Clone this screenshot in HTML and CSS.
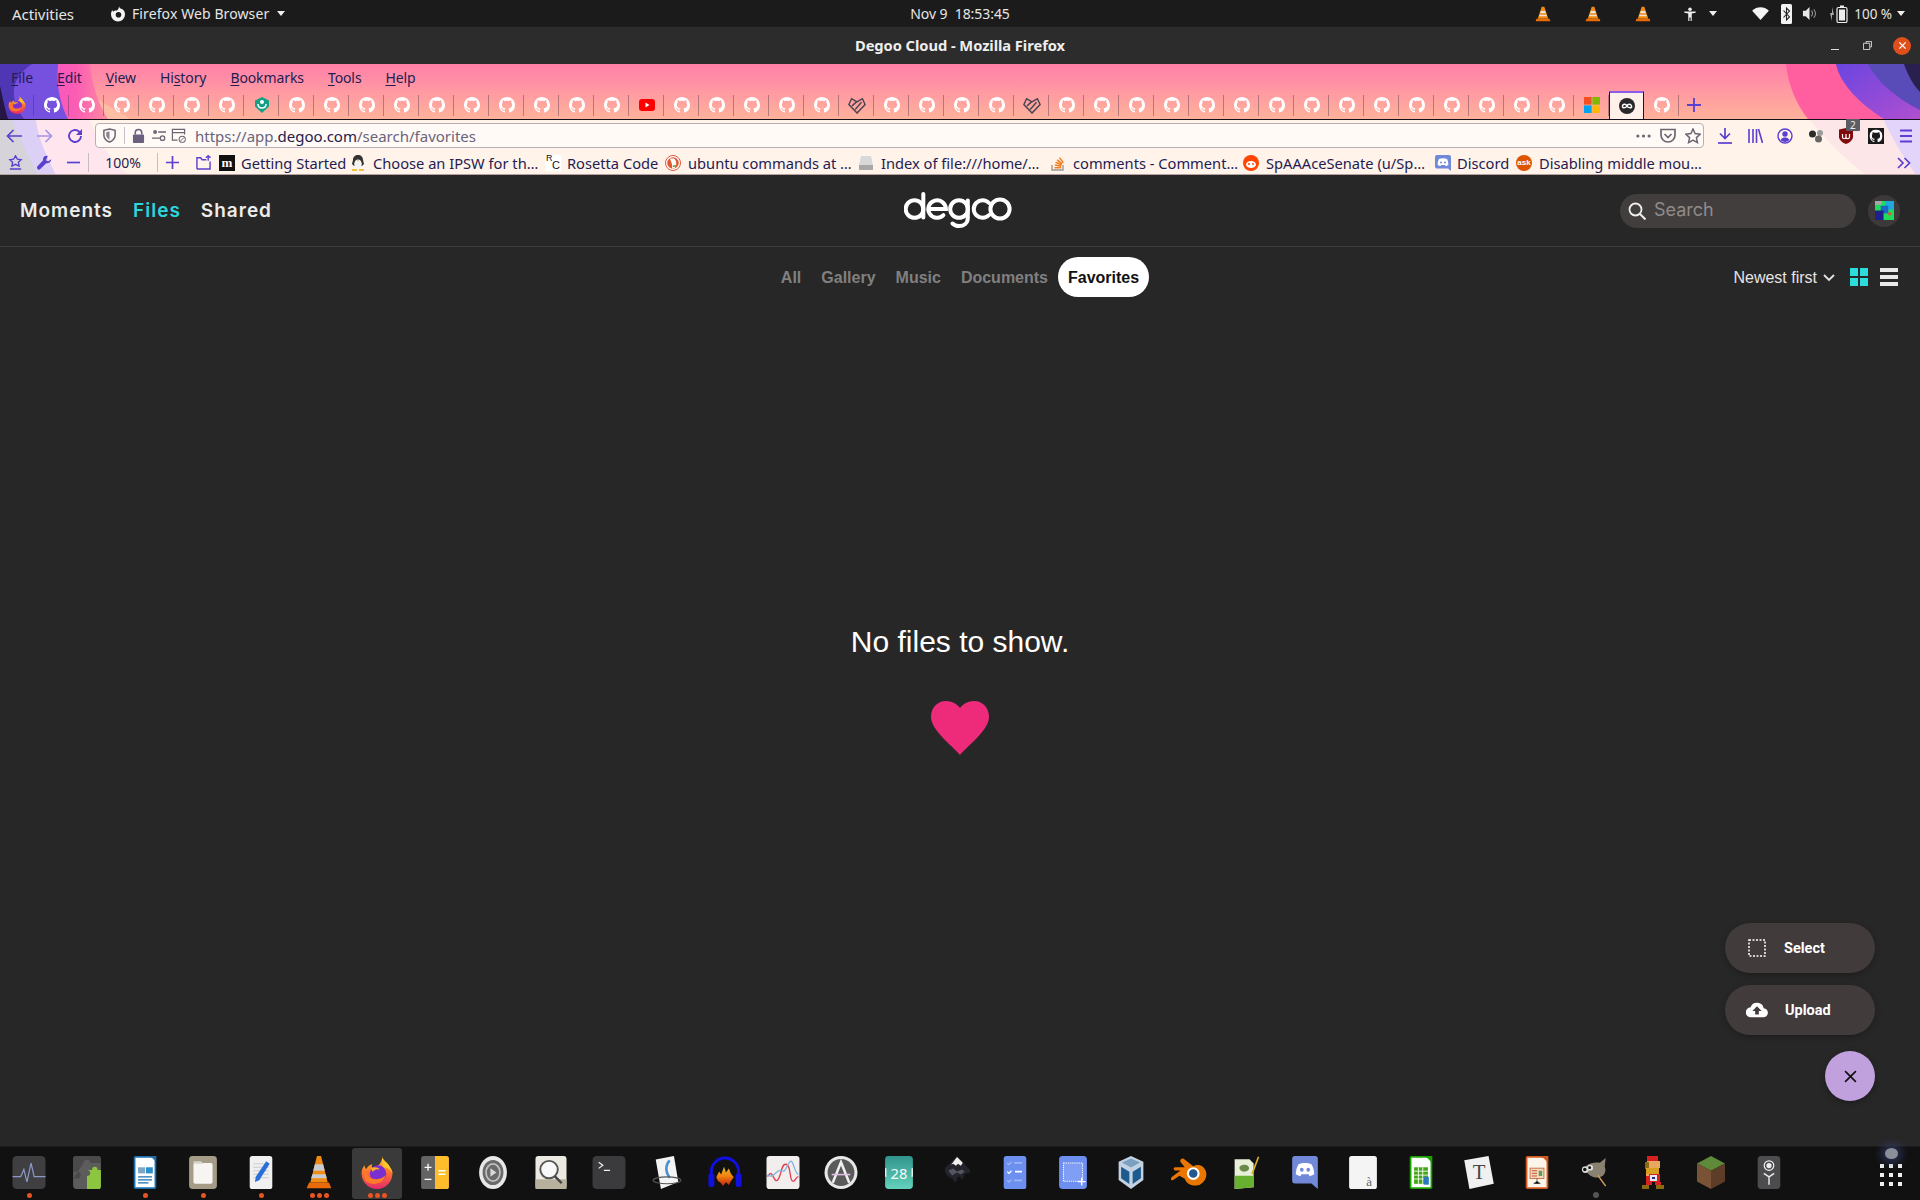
FILE: index.html
```html
<!DOCTYPE html>
<html lang="en">
<head>
<meta charset="utf-8">
<title>Degoo Cloud - Mozilla Firefox</title>
<link rel="stylesheet" href="styles.css">
</head>
<body>
<svg class="defs" aria-hidden="true">
  <defs>
    <linearGradient id="pinkg" x1="0" y1="0" x2="0" y2="1"><stop offset="0" stop-color="#ff80a9"/><stop offset="1" stop-color="#ffb29b"/></linearGradient>
    <linearGradient id="magg" x1="0" y1="0" x2="1" y2="0"><stop offset="0" stop-color="#f24fd0"/><stop offset=".7" stop-color="#fb5cb4"/><stop offset="1" stop-color="#ff8aa0"/></linearGradient>
    <linearGradient id="purg" x1="0" y1="0" x2="1" y2="1"><stop offset="0" stop-color="#6a45e0"/><stop offset="1" stop-color="#b04fd0"/></linearGradient>
    <linearGradient id="ffg" x1="0" y1="0" x2="0" y2="1"><stop offset="0" stop-color="#ffd02a"/><stop offset=".45" stop-color="#ff7a2a"/><stop offset="1" stop-color="#e5286e"/></linearGradient>
    <linearGradient id="tealg" x1="0" y1="0" x2="0" y2="1"><stop offset="0" stop-color="#32938c"/><stop offset="1" stop-color="#62d2bc"/></linearGradient>
    <linearGradient id="audg" x1="0" y1="0" x2="0" y2="1"><stop offset="0" stop-color="#e8c020"/><stop offset=".5" stop-color="#f08010"/><stop offset="1" stop-color="#c02010"/></linearGradient>
    <symbol id="gh" viewBox="0 0 16 16"><path fill-rule="evenodd" d="M8 0C3.58 0 0 3.58 0 8c0 3.54 2.29 6.53 5.47 7.59.4.07.55-.17.55-.38 0-.19-.01-.82-.01-1.49-2.01.37-2.53-.49-2.69-.94-.09-.23-.48-.94-.82-1.13-.28-.15-.68-.52-.01-.53.63-.01 1.08.58 1.23.82.72 1.21 1.87.87 2.33.66.07-.52.28-.87.51-1.07-1.78-.2-3.64-.89-3.64-3.95 0-.87.31-1.59.82-2.15-.08-.2-.36-1.02.08-2.12 0 0 .67-.21 2.2.82.64-.18 1.32-.27 2-.27.68 0 1.36.09 2 .27 1.53-1.04 2.2-.82 2.2-.82.44 1.1.16 1.92.08 2.12.51.56.82 1.28.82 2.15 0 3.07-1.87 3.75-3.65 3.95.29.25.54.73.54 1.48 0 1.07-.01 1.93-.01 2.2 0 .21.15.46.55.38A8.013 8.013 0 0016 8c0-4.42-3.58-8-8-8z"/></symbol>
    <symbol id="ff" viewBox="0 0 32 32"><path fill="url(#ffg)" d="M21 0c0 4 5 6 7 10 1 2 3 4 3 7 0 8-6.500 15-15 15S1 25 1 17c0-3 1-6 3-8 0 1 .5 3 1.500 3.500C7 10 9 8.500 11.500 8c-1 1.500-.5 3 .5 3.500 4-.5 9.500-4.500 9-11.500z"/><path fill="#ffc52a" d="M21 0c0 4 5 6 7 10 1 2 3 4 3 7-2-4-5-6-9-6-1-4 0-7-1-11z"/><circle cx="17" cy="17" r="8" fill="#7b2fd0"/><path fill="#ff7a2a" d="M4 14c3 9 14 11 20 5-1 8-13 11-19 5-2-3-2-7-1-10z"/><path fill="#ffb02a" d="M10 12c3-2 7-1 9 1-3-.5-6 0-7 2.500z"/></symbol>
    <symbol id="heart2" viewBox="0 0 20 20"><path fill="none" stroke="#4a4452" stroke-width="1.600" d="M10 19 1 9.500 4 3l6 3.500L16 3l3 6.500zM4.500 11 10 6M8 15l7-8"/></symbol>
    <symbol id="cone" viewBox="0 0 24 24"><path fill="#f08a12" d="M10 1h4l6 18H4z"/><path fill="#e8e4dc" d="M8.700 7.500h6.600l1.100 3.500H7.600zM6.800 13h10.400l.7 2.500H6.100z"/><path fill="#e86a0a" d="M2 19h20l1 4H1z"/></symbol>
  </defs>
</svg>

<header class="topbar">
  <div class="top-left">
    <span class="top-act">Activities</span>
    <span class="top-app">
      <svg class="top-ff" viewBox="0 0 16 16"><path fill="#f4f4f4" d="M9 0c0 2 2 3 3 3 2 1 3 3 3 5.500a7 7 0 1 1-14 0c0-2 .6-3.500 1.500-4.500 0 1 .5 1.500 1 1.500 1-1.500 3-1 3.500-1C8.500 3 9 2 9 0z"/><circle cx="8.500" cy="8.800" r="2.800" fill="#1c1c1c"/></svg>
      <span class="top-name">Firefox Web Browser</span>
      <i class="caret"></i>
    </span>
  </div>
  <div class="top-clock">Nov 9&nbsp; 18:53:45</div>
  <div class="top-right">
    <svg class="tray-cone"><use href="#cone"/></svg>
    <svg class="tray-cone"><use href="#cone"/></svg>
    <svg class="tray-cone"><use href="#cone"/></svg>
    <svg class="tray-person" viewBox="0 0 16 16"><circle cx="8" cy="2.500" r="2" fill="#eee"/><path fill="#eee" d="M1.500 5h13v1.600L10 7.500V16H8.700v-4H7.300v4H6V7.500L1.500 6.600z"/></svg>
    <i class="caret tray-caret"></i>
    <svg class="tray-wifi" viewBox="0 0 18 14"><path fill="#f4f4f4" d="M9 14 0 4c5-5 13-5 18 0z"/></svg>
    <svg class="tray-bt" viewBox="0 0 11 20"><rect width="11" height="20" rx="1.500" fill="#f2f2f2"/><path fill="none" stroke="#222" stroke-width="1.100" d="m2.500 6.500 6 6.500-3 3V4l3 3-6 6.500"/></svg>
    <svg class="tray-vol" viewBox="0 0 16 16"><path fill="#e8e8e8" d="M1 5h3l4-4v14l-4-4H1z"/><path fill="none" stroke="#999" stroke-width="1.100" d="M10 5c1.500 1.800 1.500 4.200 0 6M12.500 3.500c2.500 3 2.500 6 0 9"/></svg>
    <svg class="tray-bat" viewBox="0 0 20 18"><path fill="#aaa" d="M3 2v6H1l2 8v-6h2z"/><rect x="8" y="2.500" width="10" height="15" rx="1.500" fill="none" stroke="#eee" stroke-width="1.200"/><rect x="11" y="0.500" width="4" height="2" fill="#eee"/><rect x="10" y="4.500" width="6" height="11" fill="#eee"/></svg>
    <span class="top-pct">100 %</span>
    <i class="caret"></i>
  </div>
</header>

<div class="titlebar">
  <span class="title">Degoo Cloud - Mozilla Firefox</span>
  <div class="winctl">
    <i class="win-min"></i>
    <svg class="win-max" viewBox="0 0 10 10"><path fill="none" stroke="#ddd" d="M3.500 2.500v-2h6v6h-2M.5 2.500h7v7h-7z"/></svg>
    <span class="win-close"><svg viewBox="0 0 10 10"><path stroke="#fff" stroke-width="1.400" d="m1.500 1.500 7 7M8.500 1.500l-7 7"/></svg></span>
  </div>
</div>

<div class="chrome">
  <svg class="decor" viewBox="0 0 1920 111" preserveAspectRatio="none" aria-hidden="true">
    <rect width="1920" height="55" fill="url(#pinkg)"/>
    <path fill="#ffc4a8" opacity=".7" d="M80 24C95 35 115 45 130 55H80z"/>
    <path fill="url(#magg)" d="M0 0H90C92 20 98 40 108 55H0z"/>
    <path fill="#7650de" d="M0 0H58C56 20 60 40 68 55H0z"/>
    <path fill="#4f36b4" d="M0 0H32C14 12 6 30 24 55H0z"/>
    <path fill="#251645" d="M0 22C3 35 5 45 8 55H0z"/>
    <path fill="#ff5f9e" d="M1786 0C1788 20 1796 40 1808 55H1920V0z"/>
    <path fill="url(#purg)" d="M1836 0C1840 20 1860 40 1884 55H1920V0z"/>
    <path fill="#5a4cb8" d="M1868 0C1878 20 1900 36 1920 46V0z"/>
    <path fill="#292050" d="M1904 0C1908 12 1914 22 1920 28V0z"/>
    <rect y="55" width="1920" height="1" fill="#14101a"/>
    <rect y="56" width="1920" height="55" fill="#fff3ea"/>
    <path fill="#ffe6ee" d="M0 56H90C96 75 110 95 128 111H0z"/>
    <path fill="#dcd0f6" d="M0 56H36C38 75 48 95 56 111H0z"/>
    <path fill="#d6d3da" d="M0 56H12C20 75 30 95 38 111H0z"/>
    <path fill="#fde6e8" d="M1810 56C1825 75 1845 95 1866 111H1920V56z"/>
    <path fill="#e2d4fa" d="M1884 56C1892 75 1905 95 1916 111H1920V56z"/>
    <rect y="110" width="1920" height="1" fill="#b8a0a0"/>
  </svg>

  <nav class="menubar">
    <span><u>F</u>ile</span><span><u>E</u>dit</span><span><u>V</u>iew</span><span>Hi<u>s</u>tory</span><span><u>B</u>ookmarks</span><span><u>T</u>ools</span><span><u>H</u>elp</span>
  </nav>

  <div class="tabstrip">
    <span class="tab"><svg class="fav fav-ff"><use href="#ff"/></svg></span>
    <span class="tab"><svg class="fav gh"><use href="#gh"/></svg></span>
    <span class="tab"><svg class="fav gh"><use href="#gh"/></svg></span>
    <span class="tab"><svg class="fav gh"><use href="#gh"/></svg></span>
    <span class="tab"><svg class="fav gh"><use href="#gh"/></svg></span>
    <span class="tab"><svg class="fav gh"><use href="#gh"/></svg></span>
    <span class="tab"><svg class="fav gh"><use href="#gh"/></svg></span>
    <span class="tab"><svg class="fav" viewBox="0 0 16 16"><path fill="#14a085" d="M8 0l7 3.500v6L8 16 1 9.500v-6z"/><circle cx="8" cy="5" r="2" fill="#fff"/><path fill="none" stroke="#fff" stroke-width="1.500" d="M4 7c0 3 2 4 4 4s4-1 4-4"/></svg></span>
    <span class="tab"><svg class="fav gh"><use href="#gh"/></svg></span>
    <span class="tab"><svg class="fav gh"><use href="#gh"/></svg></span>
    <span class="tab"><svg class="fav gh"><use href="#gh"/></svg></span>
    <span class="tab"><svg class="fav gh"><use href="#gh"/></svg></span>
    <span class="tab"><svg class="fav gh"><use href="#gh"/></svg></span>
    <span class="tab"><svg class="fav gh"><use href="#gh"/></svg></span>
    <span class="tab"><svg class="fav gh"><use href="#gh"/></svg></span>
    <span class="tab"><svg class="fav gh"><use href="#gh"/></svg></span>
    <span class="tab"><svg class="fav gh"><use href="#gh"/></svg></span>
    <span class="tab"><svg class="fav gh"><use href="#gh"/></svg></span>
    <span class="tab"><svg class="fav" viewBox="0 0 16 16"><rect y="2" width="16" height="12" rx="3" fill="#f00"/><path fill="#fff" d="m6.500 5.500 4 2.500-4 2.500z"/></svg></span>
    <span class="tab"><svg class="fav gh"><use href="#gh"/></svg></span>
    <span class="tab"><svg class="fav gh"><use href="#gh"/></svg></span>
    <span class="tab"><svg class="fav gh"><use href="#gh"/></svg></span>
    <span class="tab"><svg class="fav gh"><use href="#gh"/></svg></span>
    <span class="tab"><svg class="fav gh"><use href="#gh"/></svg></span>
    <span class="tab"><svg class="fav fav-h"><use href="#heart2"/></svg></span>
    <span class="tab"><svg class="fav gh"><use href="#gh"/></svg></span>
    <span class="tab"><svg class="fav gh"><use href="#gh"/></svg></span>
    <span class="tab"><svg class="fav gh"><use href="#gh"/></svg></span>
    <span class="tab"><svg class="fav gh"><use href="#gh"/></svg></span>
    <span class="tab"><svg class="fav fav-h"><use href="#heart2"/></svg></span>
    <span class="tab"><svg class="fav gh"><use href="#gh"/></svg></span>
    <span class="tab"><svg class="fav gh"><use href="#gh"/></svg></span>
    <span class="tab"><svg class="fav gh"><use href="#gh"/></svg></span>
    <span class="tab"><svg class="fav gh"><use href="#gh"/></svg></span>
    <span class="tab"><svg class="fav gh"><use href="#gh"/></svg></span>
    <span class="tab"><svg class="fav gh"><use href="#gh"/></svg></span>
    <span class="tab"><svg class="fav gh"><use href="#gh"/></svg></span>
    <span class="tab"><svg class="fav gh"><use href="#gh"/></svg></span>
    <span class="tab"><svg class="fav gh"><use href="#gh"/></svg></span>
    <span class="tab"><svg class="fav gh"><use href="#gh"/></svg></span>
    <span class="tab"><svg class="fav gh"><use href="#gh"/></svg></span>
    <span class="tab"><svg class="fav gh"><use href="#gh"/></svg></span>
    <span class="tab"><svg class="fav gh"><use href="#gh"/></svg></span>
    <span class="tab"><svg class="fav gh"><use href="#gh"/></svg></span>
    <span class="tab"><svg class="fav gh"><use href="#gh"/></svg></span>
    <span class="tab"><svg class="fav" viewBox="0 0 16 16"><rect width="7.600" height="7.600" fill="#f25022"/><rect x="8.400" width="7.600" height="7.600" fill="#7fba00"/><rect y="8.400" width="7.600" height="7.600" fill="#00a4ef"/><rect x="8.400" y="8.400" width="7.600" height="7.600" fill="#ffb900"/></svg></span>
    <span class="tab tab-active"><svg class="fav" viewBox="0 0 16 16"><circle cx="8" cy="8" r="8" fill="#2a2828"/><path fill="none" stroke="#fff" stroke-width="1.500" d="M8 8c-1-2-4-2.500-4.500 0S7 10 8 8s3.500-2.500 4.500 0S9 10 8 8z"/></svg></span>
    <span class="tab"><svg class="fav gh"><use href="#gh"/></svg></span>
    <svg class="tab-plus" viewBox="0 0 14 14"><path stroke="#5a3fd0" stroke-width="1.800" d="M7 0v14M0 7h14"/></svg>
  </div>

  <div class="navbar">
    <svg class="nav-ic nav-back" viewBox="0 0 16 16"><path fill="none" stroke="#5a3fd0" stroke-width="1.700" d="M16 8H1.500M7.500 2 1.500 8l6 6"/></svg>
    <svg class="nav-ic nav-fwd" viewBox="0 0 16 16"><path fill="none" stroke="#a593e8" stroke-width="1.700" d="M0 8h14.500M8.500 2l6 6-6 6"/></svg>
    <svg class="nav-ic nav-reload" viewBox="0 0 16 16"><path fill="none" stroke="#5a3fd0" stroke-width="1.900" d="M14 8a6 6 0 1 1-2-4.500l2 2"/><path fill="#5a3fd0" d="M15 1v6H9z"/></svg>
    <div class="urlbar">
      <svg class="ub-shield" viewBox="0 0 16 16"><path fill="none" stroke="#6b6672" stroke-width="1.600" d="M8 1l6 1.500V8c0 3-3 6-6 7-3-1-6-4-6-7V2.500z"/><path fill="#8a8590" d="M8 3.500v9c-2-1-3.500-3-3.500-4.500V4.500z"/></svg>
      <i class="ub-sep"></i>
      <svg class="ub-lock" viewBox="0 0 14 16"><path fill="none" stroke="#6b6080" stroke-width="1.700" d="M3.500 7V5a3.500 3.500 0 0 1 7 0v2"/><rect x="1" y="7" width="12" height="9" rx="1" fill="#6b6080"/></svg>
      <svg class="ub-perm" viewBox="0 0 16 14"><circle cx="3.500" cy="3" r="2.200" fill="#6b6672"/><path stroke="#6b6672" stroke-width="1.500" d="M7 3h9M0 10h9"/><circle cx="12" cy="10" r="2.500" fill="none" stroke="#6b6672" stroke-width="1.500"/></svg>
      <svg class="ub-block" viewBox="0 0 16 16"><path fill="none" stroke="#6b6672" stroke-width="1.300" d="M7 13H1.500V1.500h13V7M1.500 5h13"/><circle cx="12" cy="12" r="3.300" fill="none" stroke="#6b6672" stroke-width="1.100"/><path stroke="#6b6672" d="m10 14 4-4"/></svg>
      <span class="url">https://app.<b>degoo.com</b>/search/favorites</span>
      <svg class="ub-dots" viewBox="0 0 16 4"><circle cx="2" cy="2" r="1.700"/><circle cx="8" cy="2" r="1.700"/><circle cx="14" cy="2" r="1.700"/></svg>
      <svg class="ub-pocket" viewBox="0 0 16 16"><path fill="none" stroke="#6b6672" stroke-width="1.700" d="M1 1.500h14V7c0 4-3 7-7 7s-7-3-7-7z"/><path fill="none" stroke="#6b6672" stroke-width="1.700" d="m4.500 6 3.500 3.500L11.500 6"/></svg>
      <svg class="ub-star" viewBox="0 0 16 16"><path fill="none" stroke="#6b6672" stroke-width="1.500" d="m8 1 2.100 4.600 5 .6-3.700 3.400 1 5L8 12.100 3.600 14.600l1-5L.9 6.200l5-.6z"/></svg>
    </div>
    <div class="nav-right">
      <svg class="nr" viewBox="0 0 16 16"><path fill="none" stroke="#5a3fd0" stroke-width="1.700" d="M8 0v10M3 5.500 8 10.500l5-5"/><path stroke="#5a3fd0" stroke-width="1.700" d="M1 15h14"/></svg>
      <svg class="nr" viewBox="0 0 16 16"><path stroke="#5a3fd0" stroke-width="1.600" d="M2 1v14M6 1v14M9.500 1v14M11.500 1l4 14"/></svg>
      <svg class="nr" viewBox="0 0 16 16"><circle cx="8" cy="8" r="7" fill="none" stroke="#5a3fd0" stroke-width="1.400"/><circle cx="8" cy="6" r="2.700" fill="#5a3fd0"/><path fill="#5a3fd0" d="M3.500 12c1-2 3-2.500 4.500-2.500s3.500.5 4.500 2.500a6 6 0 0 1-9 0z"/></svg>
      <svg class="nr" viewBox="0 0 16 16"><circle cx="12" cy="5" r="3" fill="#9a9a9a"/><circle cx="4.500" cy="6" r="3.500" fill="#2a2a2a"/><circle cx="10.500" cy="11" r="3.500" fill="#666"/></svg>
      <span class="ublock">
        <svg class="nr" viewBox="0 0 16 16"><path fill="#800b0b" d="M1 1.500 8 0l7 1.500V9c0 3-4 6-7 7-3-1-7-4-7-7z"/><path fill="none" stroke="#fff" stroke-width="1.200" d="M4.500 6v3a1.500 1.500 0 0 0 3.500 0V6 9a1.500 1.500 0 0 0 3.500 0V6"/></svg>
        <b class="ub-badge">2</b>
      </span>
      <svg class="nr nr-gh" viewBox="0 0 16 16"><rect width="16" height="16" fill="#1a1a1a"/><g fill="#fff"><use href="#gh" x="1.500" y="1.500" width="13" height="13"/></g></svg>
      <svg class="nr" viewBox="0 0 16 16"><path stroke="#5a3fd0" stroke-width="1.800" d="M2 2.500h12M2 8h12M2 13.500h12"/></svg>
    </div>
  </div>

  <div class="bookbar">
    <svg class="bk-ic" viewBox="0 0 16 16"><path fill="none" stroke="#5a3fd0" stroke-width="1.500" d="m8 .8 2 3.700 4 .5-2.900 2.800.7 4L8 10l-3.800 1.800.7-4L2 5l4-.5zM2 15h12"/></svg>
    <svg class="bk-ic" viewBox="0 0 16 16"><path fill="#5a3fd0" d="M15 4.500 12 7 9.500 5.500 11.500 1c-3-1-5.500 1.500-5 4.500L.5 12c-.8 1-.5 2.500.3 3.200.9.800 2 .5 3-.5l6-6c3 .5 5.700-1.500 5.200-4.200z"/></svg>
    <svg class="bk-ic" viewBox="0 0 16 16"><path stroke="#5a3fd0" stroke-width="1.800" d="M1 8h14"/></svg>
    <span class="zoom-val">100%</span>
    <svg class="bk-ic bk-plus" viewBox="0 0 16 16"><path stroke="#5a3fd0" stroke-width="1.800" d="M8 1v14M1 8h14"/></svg>
    <svg class="bk-ic bk-folder" viewBox="0 0 16 16"><path fill="none" stroke="#5a3fd0" stroke-width="1.500" d="M1 15V3h4l1.500 2H11M15 7v8H1M13 6V1M10.500 3 13 .8 15.500 3"/></svg>
    <div class="marks">
      <span class="bm"><i class="mk mk-m">m</i>Getting Started</span>
      <span class="bm"><svg class="mk" viewBox="0 0 16 16"><path fill="#333" d="M8 0c3 0 5 2 5 5l1 4-2 2H4L2 9l1-4c0-3 2-5 5-5z"/><ellipse cx="8" cy="9" rx="3.800" ry="4.500" fill="#f4f4f4"/><path fill="#f0c040" d="M2 14h5v2H2zM9 14h5v2H9zM7 5h2l-1 2z"/></svg>Choose an IPSW for th…</span>
      <span class="bm"><i class="mk mk-rc"><sup>R</sup><b>C</b></i>Rosetta Code</span>
      <span class="bm"><svg class="mk" viewBox="0 0 16 16"><circle cx="8" cy="8" r="7.500" fill="#fff" stroke="#de5833"/><circle cx="8" cy="8" r="5.800" fill="#de5833"/><path fill="#fff" d="M5 3.500h4c3 2 3 8 0 10H7c1-3-1-7-2-10z"/><path fill="#67bd45" d="M8 10h3v2H8z"/></svg>ubuntu commands at …</span>
      <span class="bm"><svg class="mk" viewBox="0 0 16 16"><path fill="#d8d8d8" d="M3 1h10l2 9H1z"/><rect x="1" y="10" width="14" height="5" fill="#a8a8a8"/></svg>Index of file:///home/…</span>
      <span class="bm"><svg class="mk" viewBox="0 0 16 16"><path fill="none" stroke="#999" stroke-width="1.400" d="M2 10v5h11v-5"/><path stroke="#f48024" stroke-width="1.500" d="M4.500 12.800h6.500M4.800 10l6.400 1.300M5.600 7.300l6 2.700M7.200 4.800l5 4.100M9.500 2.600l3.800 5.200"/></svg>comments - Comment…</span>
      <span class="bm"><svg class="mk" viewBox="0 0 16 16"><circle cx="8" cy="8" r="8" fill="#ff4500"/><ellipse cx="8" cy="9.500" rx="5" ry="3.500" fill="#fff"/><circle cx="6" cy="9" r="1" fill="#ff4500"/><circle cx="10" cy="9" r="1" fill="#ff4500"/></svg>SpAAAceSenate (u/Sp…</span>
      <span class="bm"><svg class="mk" viewBox="0 0 16 16"><path fill="#7289da" d="M2 0h12a2 2 0 0 1 2 2v14l-3-2.500H2a2 2 0 0 1-2-2V2a2 2 0 0 1 2-2z"/><path fill="#fff" d="M4 4c2.500-1 5.500-1 8 0 1 2 1.500 4 1.300 6-1 .7-2 1-2.800 1l-.7-1H6.200l-.7 1c-.8 0-1.800-.3-2.800-1C2.500 8 3 6 4 4z"/><circle cx="6" cy="7.500" r="1" fill="#7289da"/><circle cx="10" cy="7.500" r="1" fill="#7289da"/></svg>Discord</span>
      <span class="bm"><i class="mk mk-ask">ask</i>Disabling middle mou…</span>
    </div>
    <svg class="bk-more" viewBox="0 0 14 12"><path fill="none" stroke="#5a3fd0" stroke-width="1.700" d="m1 1 5 5-5 5M7.500 1l5 5-5 5"/></svg>
  </div>
</div>

<main class="page">
  <div class="app-head">
    <nav class="app-nav"><span>Moments</span><span class="on">Files</span><span>Shared</span></nav>
    <svg class="logo" viewBox="0 0 112 36" role="img" aria-label="degoo">
      <g fill="none" stroke="#fff" stroke-width="4" stroke-linecap="round">
        <circle cx="10.500" cy="17" r="8.800"/><path d="M19.300 2V25.500"/>
        <path d="M24.500 17h17.400a8.800 8.800 0 1 0-2.500 6.200"/>
        <circle cx="55" cy="17" r="8.800"/><path d="M63.800 8.500V26c0 5-4 8-8.800 8-2.500 0-5-1-6.500-2.500"/>
        <path d="M85 11a8.800 8.800 0 1 0 0 12"/>
        <circle cx="96" cy="17" r="9.600"/>
      </g>
    </svg>
    <div class="app-tools">
      <div class="search">
        <svg class="search-ic" viewBox="0 0 18 18"><circle cx="7.500" cy="7.500" r="6" fill="none" stroke="#eee" stroke-width="1.800"/><path stroke="#eee" stroke-width="2" d="m12 12 5.500 5.500"/></svg>
        <span>Search</span>
      </div>
      <span class="avatar"><svg viewBox="0 0 20 20"><rect width="20" height="20" fill="#1fdc5a"/><rect x="11" width="9" height="9" fill="#1ea7e0"/><rect x="6" y="5" width="8" height="8" fill="#1c66c8"/><rect y="10" width="9" height="10" fill="#20208a"/><rect x="0" y="0" width="7" height="4" fill="#a8a8a8"/><rect x="14" y="12" width="3" height="3" fill="#e0503a"/></svg></span>
    </div>
  </div>

  <div class="filters">
    <span></span>
    <nav class="filter-tabs"><span>All</span><span>Gallery</span><span>Music</span><span>Documents</span><span class="sel">Favorites</span></nav>
    <div class="view-tools">
      <span class="sort">Newest first<svg class="chev" viewBox="0 0 12 8"><path fill="none" stroke="#e4e4e4" stroke-width="1.800" d="m1 1 5 5 5-5"/></svg></span>
      <svg class="vt" viewBox="0 0 18 18"><path fill="#2cdcdc" d="M0 0h8v8H0zM10 0h8v8h-8zM0 10h8v8H0zM10 10h8v8h-8z"/></svg>
      <svg class="vt" viewBox="0 0 18 18"><path fill="#e8e8e8" d="M0 0h18v4H0zM0 7h18v4H0zM0 14h18v4H0z"/></svg>
    </div>
  </div>

  <div class="empty">
    <p>No files to show.</p>
    <svg class="heart" viewBox="0 0 58 54"><path fill="#ee2a7b" d="M29 54C25 48 0 30 0 16 0 6 7 0 15 0c6 0 11 3 14 7 3-4 8-7 14-7 8 0 15 6 15 16 0 14-25 32-29 38z"/></svg>
  </div>

  <div class="fabs">
    <button class="fab"><svg viewBox="0 0 18 18"><rect x="1" y="1" width="16" height="16" fill="none" stroke="#fff" stroke-width="1.500" stroke-dasharray="2 1.500"/></svg>Select</button>
    <button class="fab"><svg class="fab-cloud" viewBox="0 0 24 16"><path fill="#fff" d="M19.300 6A7.500 7.500 0 0 0 5 5 5.500 5.500 0 0 0 5.500 16h13a5 5 0 0 0 .8-10z"/><path fill="#413b3b" d="M12 4l5 5h-3v4h-4V9H7z"/></svg>Upload</button>
    <button class="fab-close" aria-label="Close"><svg viewBox="0 0 12 12"><path stroke="#111" stroke-width="1.500" d="m1 1 10 10M11 1 1 11"/></svg></button>
  </div>
</main>

<footer class="dock">
  <div class="dock-apps">
    <span class="app run"><svg class="d" viewBox="0 0 32 32"><rect width="32" height="32" rx="4" fill="#3f3f42"/><path fill="none" stroke="#8a98c8" stroke-width="1.200" d="M0 20h8l3-7 3 12 4-18 3 13h11"/></svg></span>
    <span class="app"><svg class="d" viewBox="0 0 32 38"><rect width="32" height="38" rx="4" fill="#5c5c5c"/><path fill="#4a4a4a" d="M12 8c0-5 8-5 8 0h12V3a3 3 0 0 0-3-3H3a3 3 0 0 0-3 3v15h5c5 0 5 8 0 8H0"/><path fill="#8cc63f" d="M16 38V23c5 0 5-7 0-7h6c-1-5 7-5 6 0h4v19a3 3 0 0 1-3 3z"/></svg></span>
    <span class="app run"><svg class="d" viewBox="0 0 26 38"><path fill="#1b6fae" d="M2 0h17l7 7v29a2 2 0 0 1-2 2H2a2 2 0 0 1-2-2V2a2 2 0 0 1 2-2z"/><rect x="2" y="2" width="22" height="34" fill="#fff"/><path fill="#1b6fae" d="M19 0h7v7z"/><rect x="5" y="13" width="8" height="7" fill="#7aa6c8"/><rect x="14" y="13" width="8" height="7" fill="#2a8ec8"/><path stroke="#1b6fae" stroke-width="1.500" d="M5 24h16M5 27.500h16M5 31h12"/></svg></span>
    <span class="app run"><svg class="d" viewBox="0 0 32 38"><rect width="32" height="38" rx="4" fill="#a59c88"/><rect x="5" y="8" width="22" height="24" rx="2" fill="#f6f5f2"/><path fill="#d8d5cc" d="M5 9V6h9l2 3z"/></svg></span>
    <span class="app run"><svg class="d" viewBox="0 0 26 38"><rect width="26" height="38" rx="3" fill="#f0f0f0"/><path stroke="#c8c8c8" d="M4 9h18M4 13h18M4 17h18M4 21h18M4 25h18"/><path fill="#2a6fd8" d="M19 6l4 3-12 19-5 2 1-6z"/></svg></span>
    <span class="app run3"><svg class="d" viewBox="0 0 30 40"><path fill="#f08a12" d="M12.500 0h5l8 32h-21z"/><path fill="#c8ccd0" d="M10 10h10l2 8H8zM7 22h16l1.500 5H5.500z"/><path fill="#e86a0a" d="M3 32h24l3 7H0z"/></svg></span>
    <span class="app app-active run3"><svg class="d" viewBox="0 0 32 32"><use href="#ff" width="32" height="32"/></svg></span>
    <span class="app"><svg class="d" viewBox="0 0 32 38"><rect width="32" height="38" rx="3" fill="#636363"/><path fill="#ffbd2b" d="M16 0h13a3 3 0 0 1 3 3v32a3 3 0 0 1-3 3H16z"/><path stroke="#fff" stroke-width="1.500" d="M4 13h8M8 9v8M4 27h8M20 17h8M20 21h8"/></svg></span>
    <span class="app"><svg class="d" viewBox="0 0 32 38"><ellipse cx="16" cy="19" rx="16" ry="19" fill="#e8e8e8"/><ellipse cx="16" cy="19" rx="12" ry="14.500" fill="#6a6a6a"/><ellipse cx="16" cy="19" rx="8" ry="10" fill="none" stroke="#c0c0c0" stroke-width="2"/><path fill="#d8d8d8" d="m13 14 7 5-7 5z"/></svg></span>
    <span class="app"><svg class="d" viewBox="0 0 32 34"><rect width="32" height="34" rx="3" fill="#ece9e2"/><rect y="24" width="32" height="10" fill="#b6b09c"/><circle cx="14" cy="14" r="9" fill="#f8f8f8" stroke="#555" stroke-width="2"/><path stroke="#444" stroke-width="2.500" d="m20 21 7 7"/></svg></span>
    <span class="app"><svg class="d" viewBox="0 0 32 32"><rect width="32" height="32" rx="4" fill="#3b3b3e"/><path fill="none" stroke="#eee" stroke-width="1.200" d="m6 6 4 3-4 3M11 14h6"/></svg></span>
    <span class="app"><svg class="d" viewBox="0 0 32 38"><path fill="#f4f4f4" d="M3 4 24 0l5 30-20 8z"/><path fill="none" stroke="#4a90d0" stroke-width="3" d="M19 5c-6 7-4 15 0 20"/><ellipse cx="16" cy="28" rx="16" ry="4" fill="none" stroke="#555" stroke-width="1.300"/></svg></span>
    <span class="app"><svg class="d" viewBox="0 0 34 34"><path fill="none" stroke="#1010e0" stroke-width="3" d="M3 22V16a14 14 0 0 1 28 0v6"/><rect y="18" width="6" height="14" rx="2" fill="#1010e0"/><rect x="28" y="18" width="6" height="14" rx="2" fill="#1010e0"/><path fill="url(#audg)" d="M8 22l3-6 2 3 3-8 2 6 3-4 2 5 3 4-3 4-2 4-3-3-3 4-3-4-2-1z"/></svg></span>
    <span class="app"><svg class="d" viewBox="0 0 32 32"><rect width="32" height="32" rx="3" fill="#f2eeee"/><path fill="none" stroke="#e04050" stroke-width="1.300" d="M1 20c5-10 6 8 10 3s3-16 8-15 3 14 6 16 3-4 6-4"/><path fill="none" stroke="#80b4e0" stroke-width="1.300" d="M1 18c5 5 8-4 12-4s3 4 8-6 5 8 10 10"/></svg></span>
    <span class="app"><svg class="d" viewBox="0 0 32 32"><circle cx="16" cy="16" r="16" fill="#e8e8e8"/><circle cx="16" cy="16" r="13" fill="#5a5a5a"/><path fill="none" stroke="#f0f0f0" stroke-width="2.400" d="M8 26 16 6l8 20"/><path stroke="#e0c0e8" stroke-width="1.500" d="M7 18h18"/></svg></span>
    <span class="app"><svg class="d" viewBox="0 0 32 38"><rect width="32" height="38" rx="4" fill="url(#tealg)"/><rect x="0" y="14" width="1.500" height="10" fill="#f4f4f4"/><rect x="30.500" y="14" width="1.500" height="10" fill="#f4f4f4"/><text class="cal-num" x="16" y="26" text-anchor="middle">28</text></svg></span>
    <span class="app"><svg class="d" viewBox="0 0 28 34"><path fill="#23232c" d="M14 0 27 14c2 3-2 5-5 4-1 3-1 6-3 6-1 0-1-3-3-3s-2 6-4 6-1-4-3-4-4-1-6-4C1 16 1 13 2 12z"/><path fill="#f0f0f0" d="M14 1 20 7l-2 3-3-2-2 2-3-2-2 1z"/><path fill="#555562" d="M5 15l5-2 4 3 5-2 3 2-4 3-4-2-5 3z"/></svg></span>
    <span class="app"><svg class="d" viewBox="0 0 26 38"><rect width="26" height="38" rx="3" fill="#6d8ff0"/><path stroke="#9fb6f8" stroke-width="2" d="M12 8h9M12 28h9"/><path stroke="#fff" stroke-width="2" d="M13 18h8"/><path fill="none" stroke="#9fb6f8" stroke-width="1.500" d="m4 8 2 2 3-3M4 28l2 2 3-3"/><path fill="none" stroke="#fff" stroke-width="1.500" d="m4 18 2 2 3-3"/></svg></span>
    <span class="app"><svg class="d" viewBox="0 0 32 38"><rect width="32" height="38" rx="4" fill="#6d8ff0"/><rect x="5" y="8" width="22" height="21" fill="#7f9ef4" stroke="#fff" stroke-width="1.200" stroke-dasharray="1.500 1"/><path stroke="#fff" stroke-width="1.600" d="M26 25v9M21.500 29.500h9"/></svg></span>
    <span class="app"><svg class="d" viewBox="0 0 30 40"><path fill="#c2d2e2" d="M15 0 30 7v22L15 40 0 29V7z"/><path fill="#1d5a8e" d="M3 13l10 6v15L3 27zM27 13l-10 6v15l10-7z"/><path fill="#7ba0c0" d="M15 3 26 8l-11 6L4 8z"/></svg></span>
    <span class="app"><svg class="d" viewBox="0 0 34 26"><path fill="#ea7600" d="M12 0l9 7c4-2 9-1 11 3 3 5 1 11-4 14-6 3-13 1-15-5L8 16l-6 4c-2 1-3-1-1-3l8-6H4C2 11 2 8 4 8h9L9 3c-1-2 1-4 3-3z"/><circle cx="21" cy="14" r="6" fill="#fff"/><circle cx="21" cy="14" r="4" fill="#24588e"/></svg></span>
    <span class="app"><svg class="d" viewBox="0 0 30 40"><path fill="#e8f0d8" d="M0 4h18l5 5v29l-23 2z"/><path fill="#68b030" d="M0 24h23v14L0 40z"/><path fill="#6a8a4a" d="M6 13c3-3 9-3 11 0s-2 6-5 6-7-2-6-6z"/><path stroke="#d8b028" stroke-width="2" d="M21 22 29 1"/></svg></span>
    <span class="app"><svg class="d" viewBox="0 0 28 36"><path fill="#7289da" d="M3 0h22a3 3 0 0 1 3 3v33l-7-6H3a3 3 0 0 1-3-3V3a3 3 0 0 1 3-3z"/><path fill="#fff" d="M7 9c4-2 10-2 14 0 2 3 3 7 3 11-2 1-4 2-5 2l-1-2H10l-1 2c-1 0-3-1-5-2 0-4 1-8 3-11z"/><ellipse cx="10.500" cy="15" rx="2" ry="2.300" fill="#7289da"/><ellipse cx="17.500" cy="15" rx="2" ry="2.300" fill="#7289da"/></svg></span>
    <span class="app"><svg class="d" viewBox="0 0 32 38"><rect width="32" height="38" rx="3" fill="#f4f4f4"/><text class="glyph-a" x="23" y="34" text-anchor="middle">à</text></svg></span>
    <span class="app"><svg class="d" viewBox="0 0 26 38"><path fill="#18a303" d="M2 0h16l8 8v28a2 2 0 0 1-2 2H2a2 2 0 0 1-2-2V2a2 2 0 0 1 2-2z"/><rect x="2" y="2" width="22" height="34" fill="#fff"/><path fill="#18a303" d="M18 0h8v8z"/><rect x="5" y="13" width="16" height="19" fill="#43a815"/><path stroke="#fff" d="M5 17.500h16M5 22h16M5 26.500h16M10 13v19M15 13v19"/><rect x="16" y="24" width="6" height="9" fill="#2a78c0"/></svg></span>
    <span class="app"><svg class="d" viewBox="0 0 34 38"><path fill="#f0f0f0" d="M0 5 28 0l6 32-28 6z"/><text class="glyph-t" x="17" y="27" text-anchor="middle">T</text></svg></span>
    <span class="app"><svg class="d" viewBox="0 0 26 38"><path fill="#d2581e" d="M2 0h16l8 8v28a2 2 0 0 1-2 2H2a2 2 0 0 1-2-2V2a2 2 0 0 1 2-2z"/><rect x="2" y="2" width="22" height="34" fill="#fdf4ea"/><path fill="#d2581e" d="M18 0h8v8z"/><rect x="5" y="14" width="16" height="12" fill="#f2d8c0" stroke="#c86830"/><path stroke="#c84020" d="M7 17h6M7 20h6M7 23h6"/><rect x="15" y="17" width="4" height="6" fill="#5aa05a"/><path stroke="#555" d="M13 26v4M9 32l4-3 4 3"/></svg></span>
    <span class="app gimp"><svg class="d" viewBox="0 0 30 34"><path fill="#8a8270" d="M6 10c4-3 10-4 14-3l6-5-1 9c2 4 0 10-6 11-6 1-10-2-13-6z"/><circle cx="5" cy="14" r="3.500" fill="#ddd"/><circle cx="4.500" cy="14" r="1.800" fill="#111"/><circle cx="10" cy="12" r="3" fill="#ddd"/><circle cx="9.500" cy="12" r="1.500" fill="#111"/><path stroke="#d8a060" stroke-width="1.500" d="m18 20 8 11"/></svg></span>
    <span class="app"><svg class="d" viewBox="0 0 26 40" shape-rendering="crispEdges"><path fill="#d82020" d="M6 0h13v6H6zM4 22h18v10H4z"/><path fill="#e8a860" d="M6 6h16v8H6zM4 20h4v4H4z"/><path fill="#8a6a10" d="M3 7h5v9H3zM0 35h8v5H0zM17 35h9v5h-9z"/><path fill="#d8a020" d="M5 15h15v7H5z"/><rect x="9" y="23" width="9" height="7" fill="#e8e8f0"/><rect x="12" y="25" width="4" height="3" fill="#2a2a80"/><path fill="#d82020" d="M4 32h8v3H4zM15 32h8v3h-8z"/></svg></span>
    <span class="app"><svg class="d" viewBox="0 0 34 40"><path fill="#5e8a3a" d="M17 0 34 9 17 18 0 9z"/><path fill="#7a5236" d="M0 9l17 9v22L0 31z"/><path fill="#5e3d28" d="M34 9 17 18v22l17-9z"/></svg></span>
    <span class="app"><svg class="d" viewBox="0 0 26 38"><rect width="26" height="38" rx="4" fill="#4c4c4f"/><circle cx="13" cy="11" r="5.500" fill="none" stroke="#eee" stroke-width="1.400"/><circle cx="13" cy="11" r="3" fill="#eee"/><path stroke="#eee" stroke-width="1.600" fill="none" d="M7 20l6 4 6-4M13 24v9"/></svg></span>
  </div>
  <svg class="dock-grid" viewBox="0 0 22 22"><path fill="#f0f0f0" d="M0 0h4v4H0zM9 0h4v4H9zM18 0h4v4h-4zM0 9h4v4H0zM9 9h4v4H9zM18 9h4v4h-4zM0 18h4v4H0zM9 18h4v4H9zM18 18h4v4h-4z"/></svg>
  <i class="dock-glow"></i>
</footer>
</body>
</html>
```
FILE: styles.css
```css
* { box-sizing: border-box; }
html, body { margin: 0; height: 100%; }
body {
  width: 1920px; height: 1200px; overflow: hidden;
  display: flex; flex-direction: column;
  background: #282727; color: #fff;
  font-family: "Noto Sans", sans-serif;
}
.defs { position: absolute; width: 0; height: 0; }
i { font-style: normal; }

/* GNOME top bar */
.topbar {
  height: 27px; flex: none; background: #1b1b1b; color: #e6e6e6;
  font-size: 14px; letter-spacing: -.05px;
  display: grid; grid-template-columns: 1fr auto 1fr; align-items: center;
}
.top-left { display: flex; align-items: center; padding-left: 12px; gap: 36px; }
.top-act { font-size: 15px; }
.top-app { display: flex; align-items: center; gap: 6px; }
.top-ff { width: 16px; height: 16px; }
.top-name { letter-spacing: .1px; }
.caret { width: 0; height: 0; border: 4.500px solid transparent; border-top: 5px solid #eee; border-bottom: 0; display: inline-block; }
.top-app .caret { margin-left: 2px; }
.top-clock { text-align: center; }
.top-right { display: flex; align-items: center; justify-content: flex-end; padding-right: 15px; }
.tray-cone { width: 16px; height: 16px; margin-right: 34px; }
.tray-person { width: 14px; height: 16px; margin-right: 12px; margin-left: -2px; }
.tray-caret { margin-right: 35px; }
.tray-wifi { width: 17px; height: 13px; margin-right: 12px; }
.tray-bt { width: 11px; height: 20px; margin-right: 10px; }
.tray-vol { width: 15px; height: 15px; margin-right: 12px; }
.tray-bat { width: 20px; height: 18px; margin-right: 5px; }
.top-pct { margin-right: 5px; font-size: 13.500px; }

/* Title bar */
.titlebar {
  height: 37px; flex: none; background: #2c2c2c; position: relative;
  display: flex; align-items: center; justify-content: center;
}
.title { font-size: 14.700px; font-weight: 700; color: #eee; letter-spacing: -.05px; margin-top: -1px; }
.winctl { position: absolute; right: 9px; top: 0; height: 37px; display: flex; align-items: center; gap: 25px; }
.win-min { width: 8px; height: 1px; background: #ddd; margin-top: 8px; margin-right: -1px; }
.win-max { width: 9px; height: 9px; margin-right: -4px; }
.win-close { width: 18px; height: 18px; border-radius: 50%; background: #df4f1c; display: flex; align-items: center; justify-content: center; }
.win-close svg { width: 9px; height: 9px; }

/* Browser chrome */
.chrome { height: 111px; flex: none; position: relative; color: #241c52; font-size: 14px; letter-spacing: -.1px; }
.decor { position: absolute; inset: 0; width: 100%; height: 100%; }
.menubar, .tabstrip, .navbar, .bookbar { position: relative; }
.menubar { height: 27px; display: flex; align-items: center; gap: 24px; padding-left: 11px; }
.menubar u { text-underline-offset: 2px; }
.tabstrip { height: 28px; display: flex; align-items: stretch; }
.tab { width: 35px; flex: none; display: flex; align-items: center; justify-content: center; position: relative; }
.tab:first-child { width: 34px; }
.tab::after { content: ""; position: absolute; right: 0; top: 4px; height: 21px; width: 1px; background: rgba(70,50,70,.4); }
.tab-active { background: #fff0ea; border-top: 2px solid #8a5ae8; border-left: 1px solid #1a1426; border-right: 1px solid #1a1426; }
.tab-active::after { display: none; }
.fav { width: 16px; height: 16px; }
.fav-ff { width: 18px; height: 18px; }
.fav-h { width: 18px; height: 18px; }
.gh { fill: #fff; }
.tab-plus { width: 14px; height: 14px; margin: auto 0 auto 8px; }
.navbar { height: 29px; display: flex; align-items: center; padding-top: 4px; }
.nav-ic { width: 16px; height: 16px; flex: none; }
.nav-back { margin-left: 6px; }
.nav-fwd { margin-left: 15px; }
.nav-reload { margin-left: 14px; }
.urlbar {
  position: relative; margin-left: 12px; width: 1609px; height: 25px; flex: none;
  background: #fffaf6; border: 1px solid #b9aeb6; border-radius: 4px;
  display: flex; align-items: center; padding-left: 6px;
}
.ub-shield { width: 15px; height: 15px; }
.ub-sep { width: 1px; height: 17px; background: #c8c0c8; margin: 0 7px; }
.ub-lock { width: 13px; height: 15px; }
.ub-perm { width: 14px; height: 13px; margin-left: 7px; }
.ub-block { width: 15px; height: 15px; margin-left: 5px; }
.url { margin-left: 9px; font-size: 15px; color: #69647c; letter-spacing: 0; }
.url b { font-weight: 400; color: #22204a; }
.ub-dots { width: 15px; height: 4px; margin-left: auto; fill: #6b6672; }
.ub-pocket { width: 16px; height: 16px; margin-left: 9px; }
.ub-star { width: 16px; height: 16px; margin: 0 2px 0 9px; }
.nav-right { display: flex; align-items: center; gap: 14.200px; margin-left: 13px; }
.nr { width: 16px; height: 16px; flex: none; display: block; }
.ublock { position: relative; display: block; }
.ub-badge { position: absolute; left: 8px; top: -9px; width: 14px; height: 12px; background: #5c5c62; color: #eee; font-size: 10px; font-weight: 400; text-align: center; line-height: 12px; border-radius: 1px; }
.bookbar { height: 27px; display: flex; align-items: center; padding-top: 2px; font-size: 14.670px; letter-spacing: 0; }
.bk-ic { width: 15px; height: 15px; flex: none; margin-left: 14px; }
.bk-ic:first-child { margin-left: 8px; }
.zoom-val { width: 70px; text-align: center; margin-left: 7px; border-left: 1px solid #c8bcc0; border-right: 1px solid #c8bcc0; font-size: 14px; }
.bk-ic.bk-plus { margin-left: 7px; }
.bk-ic.bk-folder { margin-left: 16px; }
.marks { display: flex; margin-left: 8px; }
.bm { display: flex; align-items: center; gap: 7px; white-space: nowrap; width: 192px; }
.bm:nth-child(1) { width: 131px; gap: 6px; }
.bm:nth-child(2) { width: 195px; }
.bm:nth-child(3) { width: 120px; gap: 6px; }
.bm:nth-child(4) { width: 193px; }
.bm:nth-child(6) { width: 193px; }
.bm:nth-child(8) { width: 81px; gap: 6px; }
.mk { width: 16px; height: 16px; flex: none; display: block; }
.mk-m { background: #111; color: #fff; font: 700 13px/15px "Liberation Serif", serif; text-align: center; letter-spacing: 0; }
.mk-rc { background: #fff; color: #111; font: 400 9px/16px "Liberation Sans", sans-serif; letter-spacing: 0; position: relative; }
.mk-rc sup { position: absolute; left: 1px; top: -5px; font-size: 9px; }
.mk-rc b { position: absolute; left: 7px; top: 2px; font-size: 11px; font-weight: 400; }
.mk-ask { background: #dd5500; border-radius: 50%; color: #fff; font: 700 8px/16px "Liberation Sans", sans-serif; text-align: center; letter-spacing: 0; }
.bk-more { width: 14px; height: 12px; margin-left: auto; margin-right: 9px; }

/* Degoo app */
.page { flex: 1; min-height: 0; position: relative; display: flex; flex-direction: column; background: #282727; }
.app-head {
  height: 72px; flex: none; border-bottom: 1px solid #3e3c3c;
  display: grid; grid-template-columns: 1fr auto 1fr; align-items: center;
}
.app-nav { display: flex; gap: 20px; padding-left: 20px; font: 600 19px "Inter", sans-serif; color: #ececec; letter-spacing: 1px; }
.app-nav span { margin-top: -1px; }
.app-nav .on { color: #2cd6dc; }
.logo { width: 112px; height: 36px; margin-top: -1px; }
.app-tools { display: flex; align-items: center; justify-content: flex-end; padding-right: 20px; gap: 12px; }
.search {
  width: 236px; height: 34px; border-radius: 17px; background: #433e3e;
  display: flex; align-items: center; gap: 8px; padding-left: 8px;
  color: #8f8b8b; font: 400 18px/32px "Inter", sans-serif;
}
.search span { margin-top: -2px; }
.search-ic { width: 18px; height: 18px; }
.avatar { width: 32px; height: 32px; border-radius: 50%; background: #3d3939; display: flex; align-items: center; justify-content: center; }
.avatar svg { width: 19px; height: 19px; }
.filters {
  height: 60px; flex: none; padding-top: 10px;
  display: grid; grid-template-columns: 1fr auto 1fr; align-items: start;
  font-family: "Liberation Sans", sans-serif; font-size: 16px;
}
.filter-tabs { display: flex; font-weight: 700; color: #808080; }
.filter-tabs span { height: 40px; padding: 2px 10px 0; display: flex; align-items: center; border-radius: 20px; }
.filter-tabs .sel { background: #fff; color: #111; }
.view-tools { height: 40px; display: flex; align-items: center; justify-content: flex-end; padding-right: 22px; gap: 12px; color: #e4e4e4; }
.sort { display: flex; align-items: center; gap: 6px; margin-right: 3px; padding-top: 2px; }
.chev { width: 12px; height: 8px; }
.vt { width: 18px; height: 18px; }
.empty { flex: 1; display: flex; flex-direction: column; align-items: center; padding-top: 317px; font-family: "Liberation Sans", sans-serif; }
.empty p { margin: 0; font-size: 30px; line-height: 36px; color: #fff; }
.heart { width: 58px; height: 54px; margin-top: 41px; }
.fabs { position: absolute; right: 45px; bottom: 45px; display: flex; flex-direction: column; align-items: flex-end; gap: 12px; }
.fab {
  width: 150px; height: 50px; border: 0; border-radius: 25px; background: #413b3b;
  color: #fff; font: 700 14.500px "Roboto", sans-serif; padding: 0 0 0 23px;
  display: flex; align-items: center; gap: 18px; box-shadow: 0 2px 6px rgba(0,0,0,.25);
}
.fab svg { width: 18px; height: 18px; flex: none; }
.fab .fab-cloud { width: 22px; height: 16px; margin-left: -2px; margin-right: -1px; }
.fab-close {
  width: 50px; height: 50px; border: 0; border-radius: 50%; background: #c0a1de; margin-top: 4px;
  display: flex; align-items: center; justify-content: center; box-shadow: 0 2px 6px rgba(0,0,0,.3);
}
.fab-close svg { width: 13px; height: 13px; }

/* Dock */
.dock { height: 54px; flex: none; background: #111112; position: relative; display: flex; align-items: center; border-top: 1px solid #1c1c1c; }
.dock-apps { display: flex; height: 100%; }
.app { width: 58px; height: 100%; flex: none; display: flex; align-items: center; justify-content: center; position: relative; padding-bottom: 3px; }
.d { height: 33px; width: 36px; display: block; }
.app-active::before { content: ""; position: absolute; left: 4px; right: 4px; top: 1px; bottom: 1px; background: #3a3a3a; border-radius: 3px; }
.app-active svg { position: relative; }
.run::after, .run3::after, .gimp::after {
  content: ""; position: absolute; left: 50%; bottom: 2px; width: 5px; height: 5px; margin-left: -2.500px;
  border-radius: 50%; background: #e95420;
}
.run3::after { box-shadow: -7px 0 0 #e95420, 7px 0 0 #e95420; }
.gimp::after { background: #555; width: 6px; height: 6px; }
.cal-num { font: 400 17px "Noto Sans", sans-serif; fill: #f4fbf8; }
.glyph-a { font: 400 15px "Liberation Serif", serif; fill: #666; }
.glyph-t { font: 400 24px "Liberation Serif", serif; fill: #444; }
.dock-grid { width: 22px; height: 22px; position: absolute; right: 18px; top: 17px; }
.dock-glow { position: absolute; right: 22px; top: 1px; width: 13px; height: 11px; border-radius: 50%; background: #8a8f9a; box-shadow: 0 0 8px 4px rgba(60,70,130,.6); }
```
